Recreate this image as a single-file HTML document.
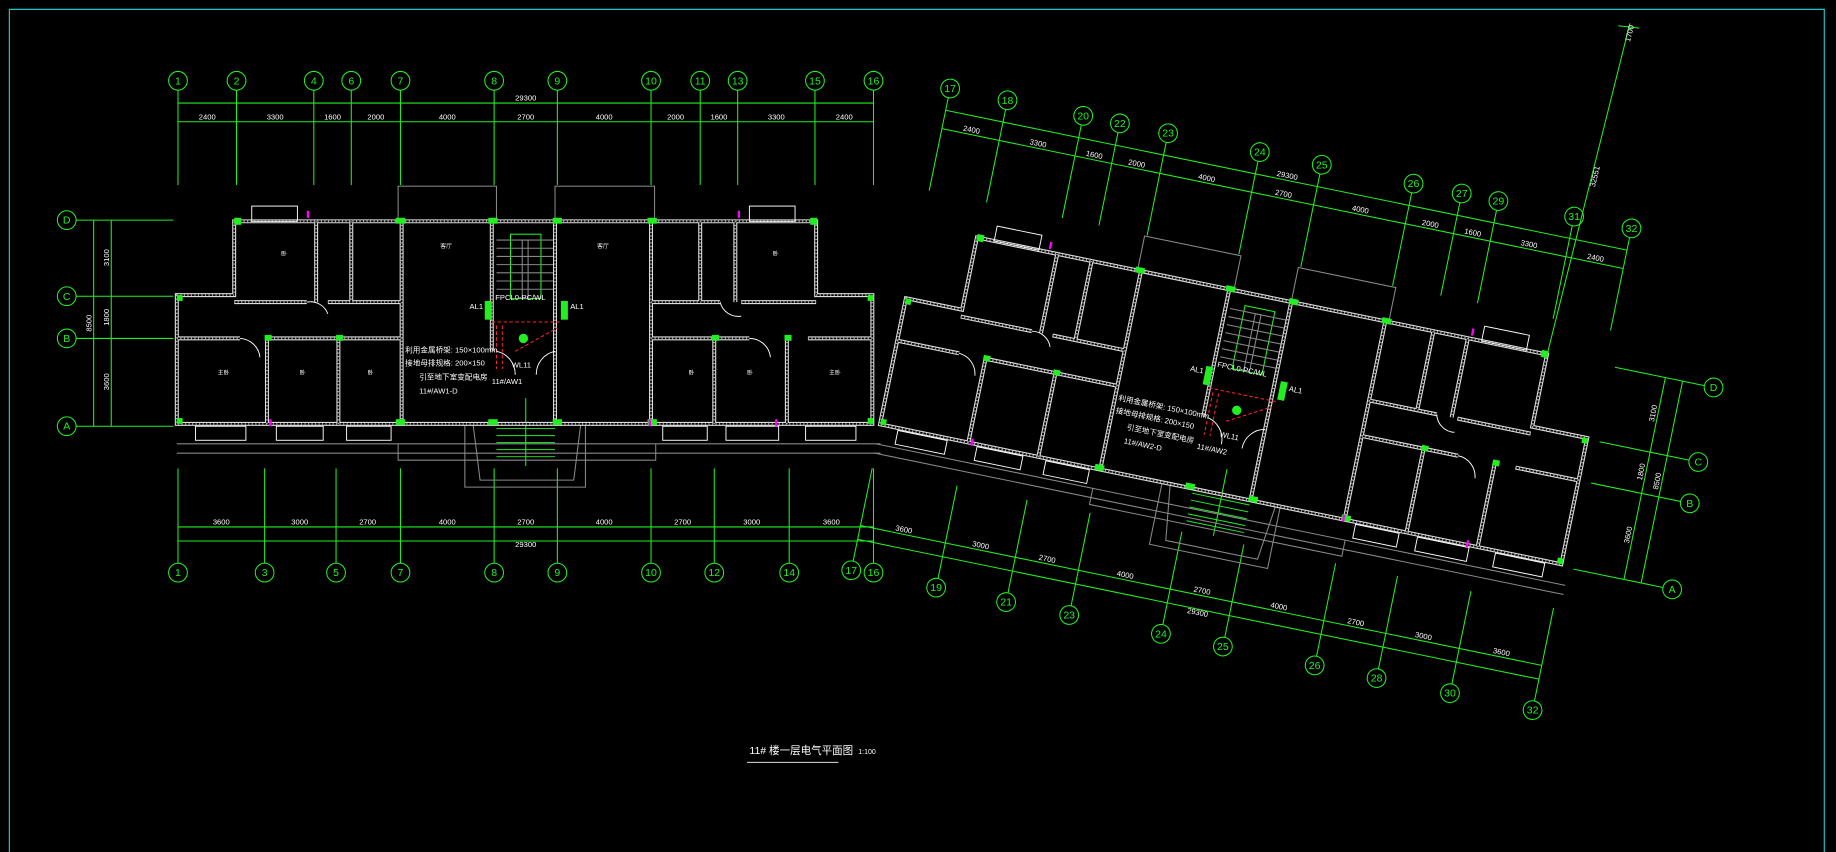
<!DOCTYPE html>
<html><head><meta charset="utf-8"><style>
html,body{margin:0;padding:0;background:#000;width:1836px;height:852px;overflow:hidden}
svg{display:block}
text{font-family:"Liberation Sans","Noto Sans CJK SC",sans-serif}
</style></head><body>
<svg width="1836" height="852" viewBox="0 0 1568 727.6" preserveAspectRatio="none" xmlns="http://www.w3.org/2000/svg">
<rect width="1568" height="728" fill="#000"/>
<path d="M8,740V8H1558V740" fill="none" stroke="#19c8c8" stroke-width="1"/>
<defs>
<path id="walls" d="M151,252H200V189H697V252H745V362H151Z M270,189V258 M300,189V258 M343,189V362 M420,189V300 M474,189V362 M556,189V362 M598,189V258 M628,189V258 M200,258H262 M280,258H343 M556,258H615 M633,258H697 M151,289H205 M228,289H343 M556,289H640 M690,289H745 M228,289V362 M289,289V362 M610,289V362 M672,289V362"/>
<g id="bld" fill="none">
 <g stroke="#22ee22" stroke-width="0.9">
  <path d="M152,77V158 M202,77V158 M268,77V158 M300,77V158 M342,77V158 M422,77V158 M476,77V158 M556,77V158 M598,77V158 M630,77V158 M696,77V158 M746,77V158"/>
  <path d="M152,88H746 M152,104H746 M152,450H746 M152,462H746"/>
  <path d="M152,400V481 M226,400V481 M287,400V481 M342,400V481 M422,400V481 M476,400V481 M556,400V481 M610,400V481 M674,400V481 M746,400V481"/>
  <circle cx="152" cy="69" r="8"/><circle cx="202" cy="69" r="8"/><circle cx="268" cy="69" r="8"/><circle cx="300" cy="69" r="8"/><circle cx="342" cy="69" r="8"/><circle cx="422" cy="69" r="8"/><circle cx="476" cy="69" r="8"/><circle cx="556" cy="69" r="8"/><circle cx="598" cy="69" r="8"/><circle cx="630" cy="69" r="8"/><circle cx="696" cy="69" r="8"/><circle cx="746" cy="69" r="8"/>
  <circle cx="152" cy="489" r="8"/><circle cx="226" cy="489" r="8"/><circle cx="287" cy="489" r="8"/><circle cx="342" cy="489" r="8"/><circle cx="422" cy="489" r="8"/><circle cx="476" cy="489" r="8"/><circle cx="556" cy="489" r="8"/><circle cx="610" cy="489" r="8"/><circle cx="674" cy="489" r="8"/><circle cx="746" cy="489" r="8"/>
  <rect x="436" y="200" width="26" height="55"/>
  <path d="M449,340V398"/>
 </g>
 <g stroke="#888" stroke-width="0.9">
  <rect x="340" y="159" width="84" height="30"/><rect x="474" y="159" width="85" height="30"/>
  <path d="M151,379H752 M151,387H752 M340,379V393H560V379 M397,362V416H500V362 M404,362L410,410H490L496,362"/>
  <path d="M424,205H474 M424,212H474 M424,219H474 M424,226H474 M424,233H474 M424,240H474 M424,247H474"/>
  <rect x="446" y="205" width="5" height="50"/>
 </g>
 <use href="#walls" stroke="#ddd" stroke-width="3.4"/>
 <use href="#walls" stroke="#000" stroke-width="1.5"/>
 <g stroke="#aaa" stroke-width="1.4" stroke-dasharray="1 2">
  <use href="#walls"/>
 </g>
 <g stroke="#fff" stroke-width="0.8">
  <rect x="215" y="176" width="39" height="13"/><rect x="640" y="176" width="39" height="13"/>
  <rect x="167" y="364" width="43" height="12"/><rect x="236" y="364" width="40" height="12"/><rect x="296" y="364" width="38" height="12"/>
  <rect x="566" y="364" width="38" height="12"/><rect x="620" y="364" width="45" height="12"/><rect x="688" y="364" width="43" height="12"/>
  <path d="M262,258A16,16 0 0 1 280,268 M615,258A16,16 0 0 0 633,270 M205,289A18,18 0 0 1 222,305 M640,289A18,18 0 0 1 658,305 M424,300A20,20 0 0 1 440,320 M474,300A20,20 0 0 0 458,320"/>
  <path d="M424,366H474 M424,372H474 M424,378H474 M424,384H474 M424,390H474" stroke="#2e2"/>
 </g>
 <g fill="#22ee22">
  <rect x="200" y="186" width="6" height="6"/><rect x="338" y="186" width="8" height="5"/><rect x="417" y="186" width="8" height="5"/><rect x="472" y="186" width="8" height="5"/><rect x="553" y="186" width="8" height="5"/><rect x="692" y="186" width="6" height="6"/>
  <rect x="151" y="252" width="5" height="5"/><rect x="741" y="252" width="5" height="5"/><rect x="151" y="357" width="5" height="5"/><rect x="741" y="357" width="5" height="5"/>
  <rect x="338" y="358" width="8" height="5"/><rect x="417" y="358" width="8" height="5"/><rect x="472" y="358" width="8" height="5"/><rect x="553" y="358" width="8" height="5"/>
  <rect x="226" y="286" width="6" height="5"/><rect x="287" y="286" width="6" height="5"/><rect x="608" y="286" width="6" height="5"/><rect x="670" y="286" width="6" height="5"/>
  <rect x="414" y="257" width="6" height="16"/><rect x="479" y="257" width="6" height="16"/>
  <circle cx="447" cy="289" r="4"/>
 </g>
 <path d="M420,275H478 M424,278V315 M429,278V315 M440,300L476,280" stroke="#f22" stroke-width="0.9" stroke-dasharray="3 2" fill="none"/>
 <g fill="#f0f"><rect x="230" y="358" width="2" height="6"/><rect x="554" y="358" width="2" height="6"/><rect x="662" y="358" width="2" height="6"/><rect x="262" y="180" width="2" height="6"/><rect x="630" y="180" width="2" height="6"/></g>
</g>
</defs>

<!-- left building -->
<use href="#bld"/>
<g fill="#22ee22" font-size="9" text-anchor="middle">
<text x="152" y="72">1</text><text x="202" y="72">2</text><text x="268" y="72">4</text><text x="300" y="72">6</text><text x="342" y="72">7</text><text x="422" y="72">8</text><text x="476" y="72">9</text><text x="556" y="72">10</text><text x="598" y="72">11</text><text x="630" y="72">13</text><text x="696" y="72">15</text><text x="746" y="72">16</text>
<text x="152" y="492">1</text><text x="226" y="492">3</text><text x="287" y="492">5</text><text x="342" y="492">7</text><text x="422" y="492">8</text><text x="476" y="492">9</text><text x="556" y="492">10</text><text x="610" y="492">12</text><text x="674" y="492">14</text><text x="746" y="492">16</text>
</g>
<g fill="#fff" font-size="6.5" text-anchor="middle">
<text x="449" y="86">29300</text>
<text x="177" y="102">2400</text><text x="235" y="102">3300</text><text x="284" y="102">1600</text><text x="321" y="102">2000</text><text x="382" y="102">4000</text><text x="449" y="102">2700</text><text x="516" y="102">4000</text><text x="577" y="102">2000</text><text x="614" y="102">1600</text><text x="663" y="102">3300</text><text x="721" y="102">2400</text>
<text x="189" y="448">3600</text><text x="256" y="448">3000</text><text x="314" y="448">2700</text><text x="382" y="448">4000</text><text x="449" y="448">2700</text><text x="516" y="448">4000</text><text x="583" y="448">2700</text><text x="642" y="448">3000</text><text x="710" y="448">3600</text>
<text x="449" y="467">29300</text>
</g>
<g stroke="#22ee22" stroke-width="0.9" fill="none">
<path d="M65,188H148 M65,253H148 M65,289H148 M65,364H148 M80,188V364 M95,188V364"/>
<circle cx="57" cy="188" r="8"/><circle cx="57" cy="253" r="8"/><circle cx="57" cy="289" r="8"/><circle cx="57" cy="364" r="8"/>
</g>
<g fill="#22ee22" font-size="9" text-anchor="middle"><text x="57" y="191">D</text><text x="57" y="256">C</text><text x="57" y="292">B</text><text x="57" y="367">A</text></g>
<g fill="#fff" font-size="6.5" text-anchor="middle">
<text transform="translate(93,220) rotate(-90)">3100</text><text transform="translate(93,271) rotate(-90)">1800</text><text transform="translate(93,326) rotate(-90)">3600</text><text transform="translate(78,276) rotate(-90)">8500</text>
</g>
<g fill="#fff" font-size="6.5">
<text x="423" y="256">FPCL0-PC/WL</text><text x="401" y="264">AL1</text><text x="487" y="264">AL1</text><text x="437" y="314">WL11</text>
<text x="346" y="301">利用金属桥架: 150×100mm</text><text x="346" y="312">接地母排规格: 200×150</text><text x="358" y="324">引至地下室变配电房</text><text x="358" y="336">11#/AW1-D</text><text x="420" y="328">11#/AW1</text>
<text x="376" y="212" font-size="5">客厅</text><text x="510" y="212" font-size="5">客厅</text><text x="240" y="218" font-size="5">卧</text><text x="660" y="218" font-size="5">卧</text><text x="186" y="320" font-size="5">主卧</text><text x="256" y="320" font-size="5">卧</text><text x="314" y="320" font-size="5">卧</text><text x="588" y="320" font-size="5">卧</text><text x="638" y="320" font-size="5">卧</text><text x="708" y="320" font-size="5">主卧</text>
</g>

<!-- right building -->
<g transform="translate(727,487) rotate(11.6) translate(-152,-489)">
<use href="#bld"/>
<g fill="#22ee22" font-size="9" text-anchor="middle">
<text x="152" y="72" transform="rotate(-11.6 152 69)">17</text><text x="202" y="72" transform="rotate(-11.6 202 69)">18</text><text x="268" y="72" transform="rotate(-11.6 268 69)">20</text><text x="300" y="72" transform="rotate(-11.6 300 69)">22</text><text x="342" y="72" transform="rotate(-11.6 342 69)">23</text><text x="422" y="72" transform="rotate(-11.6 422 69)">24</text><text x="476" y="72" transform="rotate(-11.6 476 69)">25</text><text x="556" y="72" transform="rotate(-11.6 556 69)">26</text><text x="598" y="72" transform="rotate(-11.6 598 69)">27</text><text x="630" y="72" transform="rotate(-11.6 630 69)">29</text><text x="696" y="72" transform="rotate(-11.6 696 69)">31</text><text x="746" y="72" transform="rotate(-11.6 746 69)">32</text>
<text x="152" y="492" transform="rotate(-11.6 152 489)">17</text><text x="226" y="492" transform="rotate(-11.6 226 489)">19</text><text x="287" y="492" transform="rotate(-11.6 287 489)">21</text><text x="342" y="492" transform="rotate(-11.6 342 489)">23</text><text x="422" y="492" transform="rotate(-11.6 422 489)">24</text><text x="476" y="492" transform="rotate(-11.6 476 489)">25</text><text x="556" y="492" transform="rotate(-11.6 556 489)">26</text><text x="610" y="492" transform="rotate(-11.6 610 489)">28</text><text x="674" y="492" transform="rotate(-11.6 674 489)">30</text><text x="746" y="492" transform="rotate(-11.6 746 489)">32</text>
</g>
<g fill="#fff" font-size="6.5" text-anchor="middle">
<text x="449" y="86">29300</text>
<text x="177" y="102">2400</text><text x="235" y="102">3300</text><text x="284" y="102">1600</text><text x="321" y="102">2000</text><text x="382" y="102">4000</text><text x="449" y="102">2700</text><text x="516" y="102">4000</text><text x="577" y="102">2000</text><text x="614" y="102">1600</text><text x="663" y="102">3300</text><text x="721" y="102">2400</text>
<text x="189" y="448">3600</text><text x="256" y="448">3000</text><text x="314" y="448">2700</text><text x="382" y="448">4000</text><text x="449" y="448">2700</text><text x="516" y="448">4000</text><text x="583" y="448">2700</text><text x="642" y="448">3000</text><text x="710" y="448">3600</text>
<text x="449" y="467">29300</text>
</g>
<g stroke="#22ee22" stroke-width="0.9" fill="none">
<path d="M756,188H834 M756,253H834 M756,289H834 M756,364H834 M800,188V364 M815,188V364"/>
<circle cx="842" cy="188" r="8"/><circle cx="842" cy="253" r="8"/><circle cx="842" cy="289" r="8"/><circle cx="842" cy="364" r="8"/>
</g>
<g fill="#22ee22" font-size="9" text-anchor="middle">
<text x="842" y="191" transform="rotate(-11.6 842 188)">D</text><text x="842" y="256" transform="rotate(-11.6 842 253)">C</text><text x="842" y="292" transform="rotate(-11.6 842 289)">B</text><text x="842" y="367" transform="rotate(-11.6 842 364)">A</text>
</g>
<g fill="#fff" font-size="6.5" text-anchor="middle">
<text transform="translate(798,220) rotate(-90)">3100</text><text transform="translate(798,271) rotate(-90)">1800</text><text transform="translate(798,326) rotate(-90)">3600</text><text transform="translate(813,276) rotate(-90)">8500</text>
</g>
<g fill="#fff" font-size="6.5">
<text x="423" y="256">FPCL0-PC/WL</text><text x="401" y="264">AL1</text><text x="487" y="264">AL1</text><text x="437" y="314">WL11</text>
<text x="346" y="301">利用金属桥架: 150×100mm</text><text x="346" y="312">接地母排规格: 200×150</text><text x="358" y="324">引至地下室变配电房</text><text x="358" y="336">11#/AW2-D</text><text x="420" y="328">11#/AW2</text>
</g>
</g>
<path d="M1392,20L1322,300 M1382,22L1400,24" stroke="#22ee22" stroke-width="0.9"/>
<text transform="translate(1362,160) rotate(-76)" fill="#fff" font-size="6.5">32551</text>
<text transform="translate(1392,36) rotate(-76)" fill="#fff" font-size="6.5">1700</text>

<!-- title -->
<text x="640" y="644" fill="#fff" font-size="9">11# 楼一层电气平面图</text>
<text x="733" y="644" fill="#fff" font-size="6">1:100</text>
<path d="M638,651H716" stroke="#fff" stroke-width="0.8"/>
</svg>
</body></html>
